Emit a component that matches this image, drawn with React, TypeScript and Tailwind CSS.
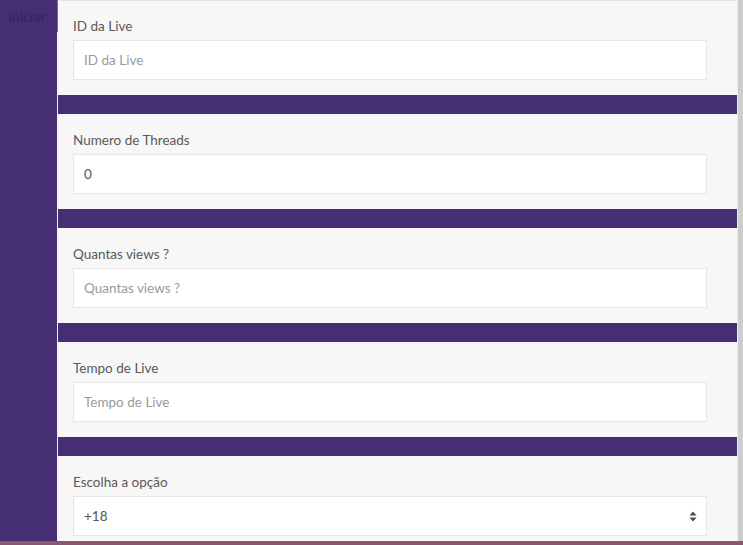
import { ReactNode } from 'react'

interface Field {
  label: string
  placeholder?: string
  value?: string
  select?: boolean
}

const fields: Field[] = [
  { label: 'ID da Live', placeholder: 'ID da Live' },
  { label: 'Numero de Threads', value: '0' },
  { label: 'Quantas views ?', placeholder: 'Quantas views ?' },
  { label: 'Tempo de Live', placeholder: 'Tempo de Live' },
  { label: 'Escolha a opção', value: '+18', select: true },
]

function SelectArrows() {
  return (
    <svg width="8" height="13" viewBox="0 0 8 13" className="text-[#4a4a4a]">
      <path d="M4 1.5 L7.5 5.5 L0.5 5.5 Z" fill="currentColor" />
      <path d="M4 11.5 L7.5 7.5 L0.5 7.5 Z" fill="currentColor" />
    </svg>
  )
}

function FormGroup({ field, first, children }: { field: Field; first?: boolean; children?: ReactNode }) {
  return (
    <div className={`${first ? 'pt-[15px]' : 'pt-[16px]'} pl-[15px] pr-[30px] pb-[15px]`}>
      <label className="block text-[13.5px] leading-[20px] text-[#595959]">{field.label}</label>
      <div className="mt-[4px] flex h-[40px] items-center justify-between border border-[#e6e6e6] bg-white pl-[10px] pr-[9px] pt-[1px] text-[13.5px]">
        {field.value ? (
          <span className="text-[#555]">{field.value}</span>
        ) : (
          <span className="text-[#9a9a9a]">{field.placeholder}</span>
        )}
        {field.select && <SelectArrows />}
      </div>
      {children}
    </div>
  )
}

export default function App() {
  return (
    <div
      className="flex h-[545px] w-[743px] flex-col overflow-hidden bg-[#f7f7f7]"
      style={{ fontFamily: 'Lato, "Open Sans", sans-serif' }}
    >
      <div className="flex h-[541px]">
        <aside className="w-[57px] shrink-0 bg-[#452f72]">
          <div className="pl-[8px] pt-[9px] text-[14px] leading-[16px] text-[#32235a]">Iniciar</div>
        </aside>
        <div className="flex w-[1px] shrink-0 flex-col bg-[#f2f2f2]">
          <div className="h-[32px] bg-[#3d7bd6]" />
        </div>
        <main className="flex-1 border-t border-[#e3e3e3] bg-[#f7f7f7]">
          {fields.map((f, i) => (
            <div key={f.label}>
              <FormGroup field={f} first={i === 0} />
              {i < fields.length - 1 && <div className="h-[19px] bg-[#452f72]" />}
            </div>
          ))}
        </main>
        <div className="w-[6px] shrink-0 border-l border-[#ececec] bg-[#cdcdcd]" />
      </div>
      <div className="h-[4px] bg-[#8a5670]" />
    </div>
  )
}
